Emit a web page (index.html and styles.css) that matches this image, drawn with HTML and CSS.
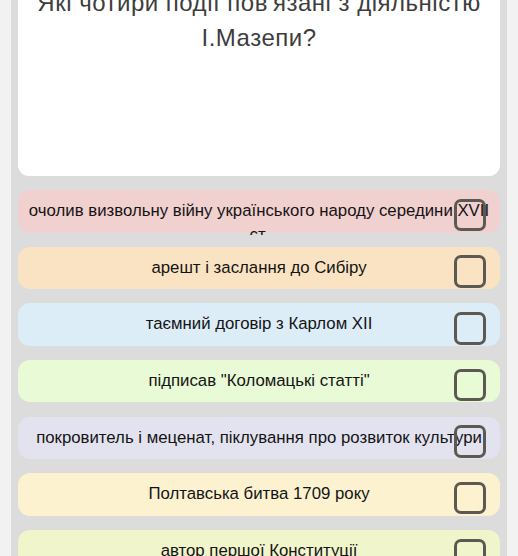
FILE: index.html
```html
<!DOCTYPE html>
<html lang="uk">
<head>
<meta charset="utf-8">
<link rel="stylesheet" href="styles.css">
</head>
<body>
<div class="panel">
  <div class="card">
    <h1 class="question">Які чотири події пов'язані з діяльністю І.Мазепи?</h1>
  </div>
  <ul class="options">
    <li class="option c-pink"><span class="label">очолив визвольну війну українського народу середини XVII ст.</span><span class="box"></span></li>
    <li class="option c-peach"><span class="label">арешт і заслання до Сибіру</span><span class="box"></span></li>
    <li class="option c-blue"><span class="label">таємний договір з Карлом XII</span><span class="box"></span></li>
    <li class="option c-green"><span class="label">підписав "Коломацькі статті"</span><span class="box"></span></li>
    <li class="option c-lav"><span class="label">покровитель і меценат, піклування про розвиток культури</span><span class="box"></span></li>
    <li class="option c-yellow"><span class="label">Полтавська битва 1709 року</span><span class="box"></span></li>
    <li class="option c-lime"><span class="label">автор першої Конституції</span><span class="box"></span></li>
  </ul>
</div>
</body>
</html>
```
FILE: styles.css
```css
html, body {
  margin: 0;
  padding: 0;
}
body {
  background: #f2f2f2;
  font-family: "Liberation Sans", Arial, sans-serif;
  width: 518px;
  height: 556px;
  overflow: hidden;
}
.panel {
  margin: 0 11px;
  background: #dcdcdc;
  padding: 0 7px;
  height: 556px;
}
.card {
  background: #ffffff;
  border-radius: 0 0 11px 11px;
  height: 176px;
  overflow: hidden;
}
.question {
  margin: -15px 0 0;
  padding: 0 8px;
  font-size: 24px;
  line-height: 35px;
  letter-spacing: 0.5px;
  font-weight: normal;
  color: #3d3d3d;
  text-align: center;
}
.options {
  list-style: none;
  margin: 0;
  padding: 14px 0 0;
  display: flex;
  flex-direction: column;
  gap: 14.17px;
}
.option {
  position: relative;
  height: 42.5px;
  border-radius: 12px;
  display: flex;
  align-items: flex-start;
  flex-shrink: 0;
}
.label {
  flex: 1;
  height: 45px;
  overflow: hidden;
  padding: 9px 6px 0;
  box-sizing: border-box;
  font-size: 16.8px;
  line-height: 24px;
  color: #141414;
  text-align: center;
}
.box {
  position: absolute;
  right: 14px;
  top: 8.7px;
  width: 32.5px;
  height: 32.5px;
  box-sizing: border-box;
  border: 3px solid #5c5852;
  border-radius: 7px;
}
.c-pink { background: #f1d0d0; }
.c-peach { background: #fae3c2; }
.c-blue { background: #dcedf8; }
.c-green { background: #e9fad6; }
.c-lav { background: #e3e3f0; }
.c-yellow { background: #fcf2d0; }
.c-lime { background: #f0f5cb; }
```
